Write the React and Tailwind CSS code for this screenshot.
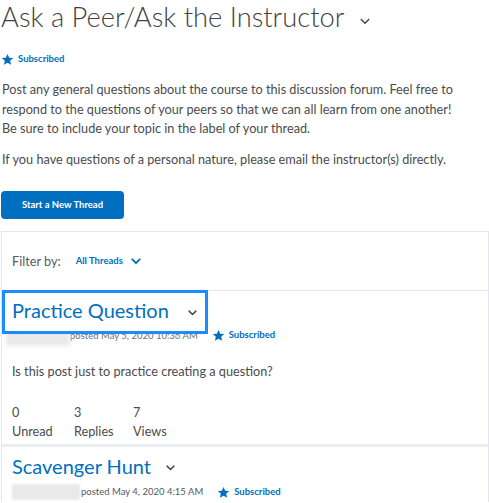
import React from 'react'

const Star = ({ className }) => (
    <svg viewBox="0 0 24 24" className={className} fill="currentColor">
        <path d="M12 1.8l3.1 6.9 7.4.7-5.6 5 1.7 7.4L12 17.9l-6.6 3.9 1.7-7.4-5.6-5 7.4-.7z" />
    </svg>
)

const Chevron = ({ className, width = 2 }) => (
    <svg viewBox="0 0 12 8" className={className} fill="none" stroke="currentColor" strokeWidth={width} strokeLinecap="round" strokeLinejoin="round">
        <path d="M1.5 1.5L6 6l4.5-4.5" />
    </svg>
)

const Subscribed = () => (
    <span className="flex items-center gap-[4px] text-[#006fbf] text-[9.5px] font-bold">
        <Star className="w-[13px] h-[13px]" />
        Subscribed
    </span>
)

const App = () => {
    return (
        <div className="w-[489px] h-[503px] overflow-hidden bg-white text-[#494c4e] font-['Lato','Liberation_Sans',sans-serif]">
            <div className="flex items-center pl-[1px] pt-[1px]">
                <h1 className="text-[27.3px] font-light leading-[32px] text-[#3f4244]">Ask a Peer/Ask the Instructor</h1>
                <Chevron className="w-[10px] h-[7px] ml-[16px] mt-[8px] text-[#494c4e]" width={1.8} />
            </div>

            <div className="mt-[19px] pl-[1px]">
                <Subscribed />
            </div>

            <div className="mt-[14px] pl-[2px] w-[462px] text-[12.7px] leading-[19.5px]">
                <p>Post any general questions about the course to this discussion forum. Feel free to respond to the questions of your peers so that we can all learn from one another! Be sure to include your topic in the label of your thread.</p>
                <p className="mt-[11px]">If you have questions of a personal nature, please email the instructor(s) directly.</p>
            </div>

            <button className="mt-[22px] ml-[1px] w-[123px] h-[28px] rounded-[4px] bg-[#006fbf] text-white text-[9.5px] font-bold">Start a New Thread</button>

            <div className="mt-[12px] ml-[1px] border-l border-r border-t border-[#e3e6ea]">
                <div className="flex items-center h-[59px] pl-[10px] border-b border-[#e3e6ea]">
                    <span className="text-[12.7px] text-[#565a5c]">Filter by:</span>
                    <span className="ml-[15px] text-[9.5px] font-bold text-[#006fbf]">All Threads</span>
                    <Chevron className="ml-[8px] w-[10px] h-[7px] text-[#006fbf]" width={2.2} />
                </div>

                <div className="pt-[2px]">
                    <div className="relative z-10 bg-white ml-[3px] w-[200px] h-[38px] flex items-center pl-[7px] ring-[3px] ring-[#1a8cff] shadow-[0_0_4px_rgba(0,0,0,0.35)]">
                        <span className="text-[20px] text-[#006fbf] -mt-[4px]">Practice Question</span>
                        <Chevron className="ml-[19px] mt-[1px] w-[9px] h-[6px] text-[#494c4e]" width={2} />
                    </div>
                    <div className="flex items-center mt-[-1px] h-[16px]">
                        <div className="w-[64px] h-[15px] ml-[4px] bg-[#e9e9e9] blur-[2px]" />
                        <span className="text-[9.5px] text-[#6e7376] -mt-[4px]">posted May 5, 2020 10:36 AM</span>
                        <span className="ml-[14px] -mt-[6px]"><Subscribed /></span>
                    </div>
                    <p className="mt-[16px] pl-[10px] text-[12.7px]">Is this post just to practice creating a question?</p>
                    <div className="flex mt-[22px] pl-[10px] text-[12.7px] leading-[19px] pb-[3px]">
                        <div className="w-[62px]"><div>0</div><div>Unread</div></div>
                        <div className="w-[59px]"><div>3</div><div>Replies</div></div>
                        <div><div>7</div><div>Views</div></div>
                    </div>
                </div>

                <div className="border-t-[3px] border-[#eceef1] pt-[4px]">
                    <div className="flex items-center pl-[10px] h-[30px]">
                        <span className="text-[20px] text-[#006fbf]">Scavenger Hunt</span>
                        <Chevron className="ml-[15px] mt-[3px] w-[9px] h-[6px] text-[#494c4e]" width={2} />
                    </div>
                    <div className="flex items-center h-[20px] mt-[1px]">
                        <div className="w-[68px] h-[16px] ml-[10px] bg-[#e9e9e9] blur-[1px]" />
                        <span className="ml-[1px] text-[9.5px] text-[#565a5c]">posted May 4, 2020 4:15 AM</span>
                        <span className="ml-[14px]"><Subscribed /></span>
                    </div>
                </div>
            </div>
        </div>
    )
}

export default App
